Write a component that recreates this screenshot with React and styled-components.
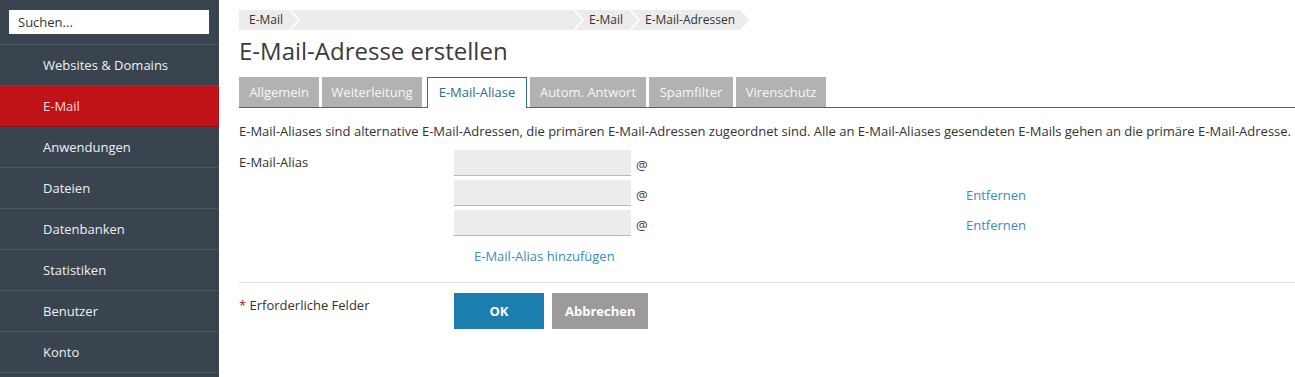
import React from "react";
import styled, { createGlobalStyle } from "styled-components";

const menu = [
  "Websites & Domains",
  "E-Mail",
  "Anwendungen",
  "Dateien",
  "Datenbanken",
  "Statistiken",
  "Benutzer",
  "Konto",
];

const crumbs = [
  { label: "E-Mail", width: 59 },
  { label: "", width: 291 },
  { label: "E-Mail", width: 63 },
  { label: "E-Mail-Adressen", width: 118 },
];

const tabs = [
  { label: "Allgemein", width: 80 },
  { label: "Weiterleitung", width: 100 },
  { label: "E-Mail-Aliase", width: 100 },
  { label: "Autom. Antwort", width: 116 },
  { label: "Spamfilter", width: 84 },
  { label: "Virenschutz", width: 90 },
];

const aliases = [{ removable: false }, { removable: true }, { removable: true }];

const App = () => {
  return (
    <>
      <GlobalStyle />
      <Page>
        <Sidebar>
          <SearchWrap>
            <Search placeholder="Suchen..." />
          </SearchWrap>
          {menu.map((item) => (
            <MenuItem key={item} active={item === "E-Mail"}>
              {item}
            </MenuItem>
          ))}
        </Sidebar>

        <Main>
          <Breadcrumbs>
            {crumbs.map((c, i) => (
              <Crumb key={i} first={i === 0} width={c.width}>
                {c.label}
              </Crumb>
            ))}
          </Breadcrumbs>
          <Title>E-Mail-Adresse erstellen</Title>

          <Tabs>
            {tabs.map((tab) => (
              <Tab
                key={tab.label}
                width={tab.width}
                active={tab.label === "E-Mail-Aliase"}
              >
                {tab.label}
              </Tab>
            ))}
          </Tabs>

          <Hint>
            E-Mail-Aliases sind alternative E-Mail-Adressen, die primären
            E-Mail-Adressen zugeordnet sind. Alle an E-Mail-Aliases gesendeten
            E-Mails gehen an die primäre E-Mail-Adresse.
          </Hint>

          <FormRow>
            <Label>E-Mail-Alias</Label>
            <Fields>
              {aliases.map((a, i) => (
                <AliasRow key={i}>
                  <AliasCell>
                    <AliasInput />
                    <At>@</At>
                  </AliasCell>
                  {a.removable && <RemoveLink href="#">Entfernen</RemoveLink>}
                </AliasRow>
              ))}
              <AddLink href="#">E-Mail-Alias hinzufügen</AddLink>
            </Fields>
          </FormRow>

          <Footer>
            <Label>
              <Required>*</Required> Erforderliche Felder
            </Label>
            <Buttons>
              <Button primary>OK</Button>
              <Button>Abbrechen</Button>
            </Buttons>
          </Footer>
        </Main>
      </Page>
    </>
  );
};

export default App;

const GlobalStyle = createGlobalStyle`
  html, body {
    margin: 0;
    padding: 0;
    background: #fff;
    font-family: "Open Sans", "Liberation Sans", sans-serif;
    font-size: 13px;
    color: #333;
  }
`;

const Page = styled.div`
  display: flex;
  min-height: 100vh;
`;

const Sidebar = styled.nav`
  width: 219px;
  flex-shrink: 0;
  background: #3a444f;
`;

const SearchWrap = styled.div`
  padding: 10px 10px 10px 9px;
  border-bottom: 1px solid #4b5661;
`;

const Search = styled.input`
  box-sizing: border-box;
  display: block;
  width: 200px;
  height: 24px;
  border: none;
  outline: none;
  padding: 0 9px;
  font-family: inherit;
  font-size: 13px;
  color: #333;
  &::placeholder {
    color: #333;
  }
`;

const MenuItem = styled.div`
  height: 40px;
  line-height: 40px;
  padding-left: 43px;
  color: ${(p) => (p.active ? "#f4dede" : "#eef0f2")};
  background: ${(p) => (p.active ? "#bf1317" : "transparent")};
  border-bottom: 1px solid ${(p) => (p.active ? "#8d1013" : "#4b5661")};
`;

const Main = styled.main`
  flex: 1;
  padding: 10px 0 0 20px;
  min-width: 0;
`;

const Breadcrumbs = styled.div`
  display: flex;
  height: 20px;
`;

const Crumb = styled.div`
  box-sizing: border-box;
  height: 20px;
  line-height: 20px;
  font-size: 12px;
  color: #333;
  background: #ececec;
  padding: 0 12px 0 ${(p) => (p.first ? "10px" : "14px")};
  min-width: ${(p) => p.width}px;
  margin-left: ${(p) => (p.first ? "0" : "-7px")};
  clip-path: ${(p) =>
    p.first
      ? "polygon(0 0, calc(100% - 9px) 0, 100% 50%, calc(100% - 9px) 100%, 0 100%)"
      : "polygon(0 0, calc(100% - 9px) 0, 100% 50%, calc(100% - 9px) 100%, 0 100%, 9px 50%)"};
`;

const Title = styled.h1`
  margin: 4px 0 0;
  font-size: 24px;
  font-weight: 400;
  color: #3b3b3b;
  line-height: 34px;
`;

const Tabs = styled.div`
  display: flex;
  gap: 3px;
  margin-top: 9px;
  border-bottom: 1px solid #2f6f8c;
  height: 30px;
`;

const Tab = styled.div`
  box-sizing: border-box;
  width: ${(p) => p.width}px;
  height: ${(p) => (p.active ? "31px" : "30px")};
  line-height: ${(p) => (p.active ? "29px" : "30px")};
  text-align: center;
  white-space: nowrap;
  color: ${(p) => (p.active ? "#2a6e8c" : "#f7f7f7")};
  background: ${(p) => (p.active ? "#fff" : "#b2b2b2")};
  border: ${(p) => (p.active ? "1px solid #2f6f8c" : "none")};
  border-bottom: none;
  margin: ${(p) => (p.active ? "0 0 -1px 2px" : "0")};
`;

const Hint = styled.p`
  margin: 14px 0 0;
  line-height: 18px;
  white-space: nowrap;
`;

const FormRow = styled.div`
  display: flex;
  margin-top: 10px;
`;

const Label = styled.div`
  width: 215px;
  flex-shrink: 0;
  padding-top: 3px;
  line-height: 18px;
`;

const Fields = styled.div`
  display: flex;
  flex-direction: column;
  gap: 4px;
`;

const AliasRow = styled.div`
  display: flex;
  align-items: center;
  height: 26px;
`;

const AliasCell = styled.div`
  display: flex;
  align-items: center;
  width: 512px;
`;

const AliasInput = styled.input`
  box-sizing: border-box;
  width: 177px;
  height: 26px;
  border: none;
  border-bottom: 1px solid #b9b9b9;
  background: #ececec;
  outline: none;
`;

const At = styled.span`
  margin-left: 5px;
  padding-top: 3px;
  font-size: 13px;
`;

const Link = styled.a`
  color: #3a8cc1;
  text-decoration: none;
`;

const RemoveLink = styled(Link)`
  padding-top: 4px;
`;

const AddLink = styled(Link)`
  margin-top: 7px;
  padding-left: 20px;
  line-height: 18px;
`;

const Footer = styled.div`
  display: flex;
  margin-top: 17px;
  border-top: 1px solid #dedede;
  padding-top: 10px;
`;

const Required = styled.span`
  color: #a31a1a;
`;

const Buttons = styled.div`
  display: flex;
  gap: 8px;
`;

const Button = styled.button`
  height: 36px;
  min-width: ${(p) => (p.primary ? "90px" : "95px")};
  border: none;
  padding: 0 13px;
  font-family: inherit;
  font-size: 13px;
  font-weight: 700;
  color: #fff;
  background: ${(p) => (p.primary ? "#1b7eae" : "#9b9b9b")};
  cursor: pointer;
`;
